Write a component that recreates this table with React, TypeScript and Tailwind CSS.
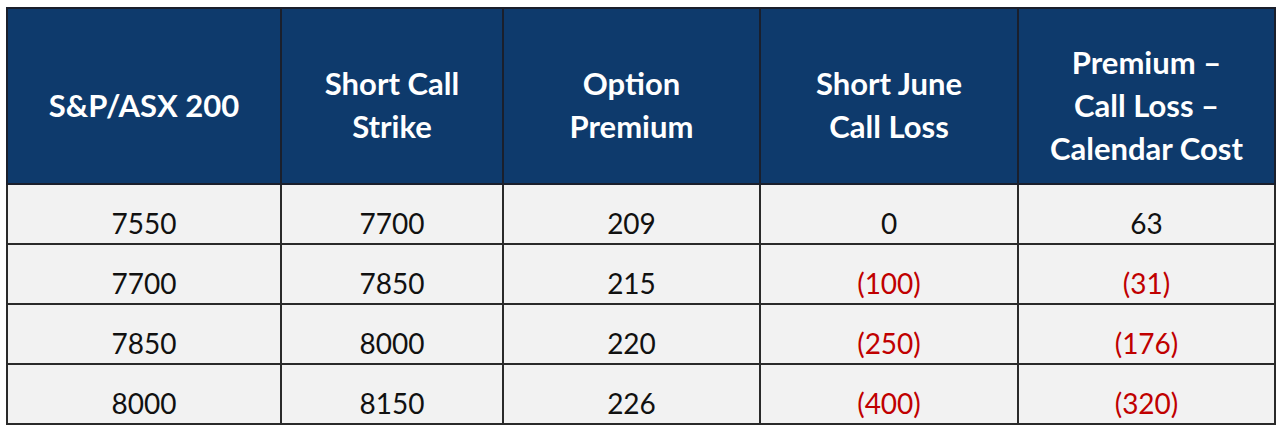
const headers = [
  ["S&P/ASX 200"],
  ["Short Call", "Strike"],
  ["Option", "Premium"],
  ["Short June", "Call Loss"],
  ["Premium –", "Call Loss –", "Calendar Cost"],
];

const widths = ["w-[274px]", "w-[222px]", "w-[257px]", "w-[258px]", "w-[257px]"];

type Cell = { value: string; loss?: boolean };

const rows: Cell[][] = [
  [{ value: "7550" }, { value: "7700" }, { value: "209" }, { value: "0" }, { value: "63" }],
  [{ value: "7700" }, { value: "7850" }, { value: "215" }, { value: "(100)", loss: true }, { value: "(31)", loss: true }],
  [{ value: "7850" }, { value: "8000" }, { value: "220" }, { value: "(250)", loss: true }, { value: "(176)", loss: true }],
  [{ value: "8000" }, { value: "8150" }, { value: "226" }, { value: "(400)", loss: true }, { value: "(320)", loss: true }],
];

export default function App() {
  return (
    <div className="h-[431px] w-[1280px] bg-white pl-[6px] pt-[7px] font-['Lato','Open_Sans',sans-serif]">
      <table className="w-[1268px] table-fixed border-collapse border-2 border-[#2a2a2a]">
        <thead>
          <tr className="h-[176px] bg-[#0e3a6c]">
            {headers.map((lines, i) => (
              <th
                key={i}
                className={`${widths[i]} border-2 border-[#1a1f2c] px-1 pt-[18px] text-center align-middle text-[31px] leading-[43px] font-bold text-white`}
              >
                {lines.map((line) => (
                  <div key={line} className="whitespace-nowrap">
                    {line}
                  </div>
                ))}
              </th>
            ))}
          </tr>
        </thead>
        <tbody>
          {rows.map((row, r) => (
            <tr key={r} className="h-[60px] bg-[#f2f2f2]">
              {row.map((cell, c) => (
                <td
                  key={c}
                  className={`border-2 border-[#2a2a2a] pt-[18px] pb-0 text-center align-middle text-[28px] leading-[40px] ${
                    cell.loss ? "text-[#c00000]" : "text-[#111111]"
                  }`}
                >
                  {cell.value}
                </td>
              ))}
            </tr>
          ))}
        </tbody>
      </table>
    </div>
  );
}
